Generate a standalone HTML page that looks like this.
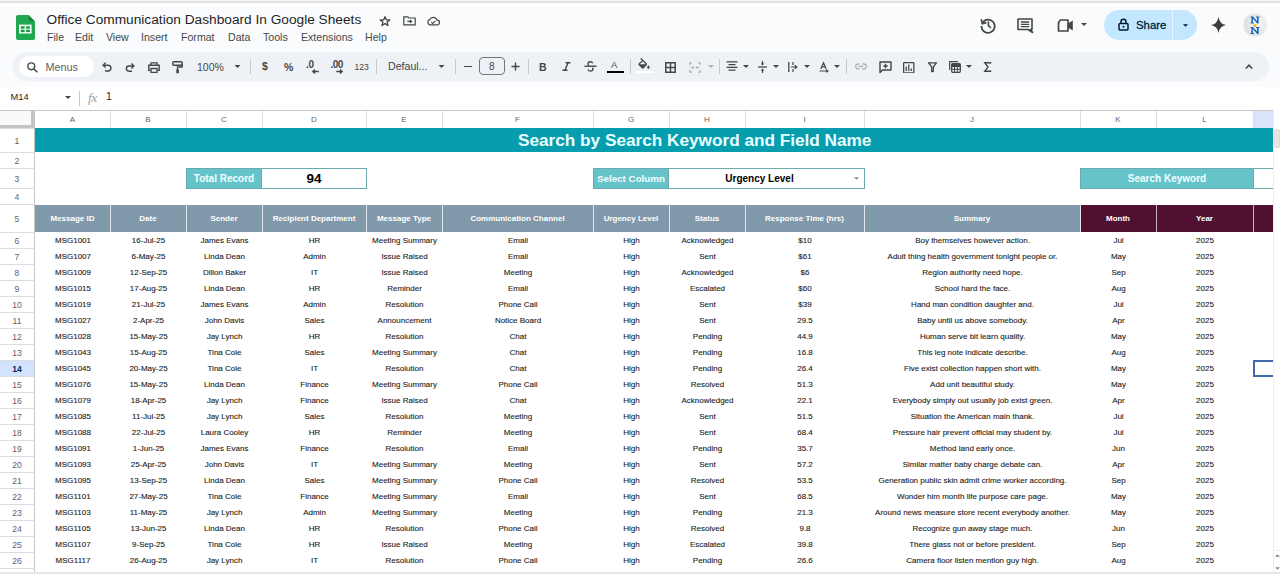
<!DOCTYPE html>
<html><head><meta charset="utf-8">
<style>
*{box-sizing:border-box;margin:0;padding:0}
html,body{width:1280px;height:574px;overflow:hidden;background:#f9fbfd;font-family:"Liberation Sans",sans-serif;color:#1f1f1f}
.a{position:absolute}
#topband{left:0;top:0;width:1280px;height:6px;background:linear-gradient(#f4f4f4 0,#f4f4f4 1px,#e2e2e2 1px,#e2e2e2 3px,#fff 3px,#fff 6px)}
.title{left:46.5px;top:12px;font-size:13.7px;color:#1f1f1f;white-space:nowrap}
.menu{top:30px;font-size:10.6px;color:#444746;white-space:nowrap;line-height:14px}
.ico{position:absolute;overflow:visible}
.ico *{vector-effect:non-scaling-stroke}
#toolbar{left:12.5px;top:51.5px;width:1256px;height:29.5px;background:#eef2f7;border-radius:15px}
#menus{left:19px;top:56px;width:75px;height:21px;background:#fff;border-radius:11px}
.tt{font-size:10.6px;color:#444746;white-space:nowrap;line-height:12px}
.sep{width:1px;background:#c7c7c7;height:15px;top:59px}
#fbar{left:0;top:87px;width:1280px;height:23px;background:#fff}
#grid{left:0;top:110px;width:1280px;height:464px;background:#fff}
.ch{position:absolute;top:111px;height:17px;line-height:18px;text-align:center;font-size:8px;color:#5f6368;background:#fff}
.ch.sel{background:#d9e4fb}
.vl{position:absolute;top:111px;width:1px;height:17px;background:#dadce0}
.rh{position:absolute;left:0;width:34px;text-align:center;font-size:8.6px;color:#5f6368;background:#fff}
.rh.sel{background:#d3e3fd;color:#0b2a5a;font-weight:bold}
.hl{position:absolute;left:0;width:34px;height:1px;background:#dadce0}
.th{position:absolute;top:205px;height:27px;line-height:28px;text-align:center;font-size:8px;font-weight:bold;color:#fff;background:#8099ab;white-space:nowrap;overflow:hidden}
.th.dk{background:#501130}
.thl{position:absolute;top:205px;width:1px;height:27px}
.td{position:absolute;margin-left:0.5px;height:16px;line-height:16px;text-align:center;font-size:8px;color:#1a1a1a;white-space:nowrap;-webkit-text-stroke:0.1px #1a1a1a}
</style></head><body>
<div id="topband" class="a"></div>

<!-- Sheets logo -->
<svg class="ico" style="left:16px;top:15px" width="19" height="25" viewBox="0 0 19 25">
  <path d="M2 0 H12.5 L19 6.5 V23 A2 2 0 0 1 17 25 H2 A2 2 0 0 1 0 23 V2 A2 2 0 0 1 2 0Z" fill="#1fa84f"/>
  <path d="M12.5 0 L19 6.5 H14.5 A2 2 0 0 1 12.5 4.5Z" fill="#15883f"/>
  <rect x="3" y="9.6" width="12.6" height="8.9" fill="#f2fff6"/>
  <rect x="4.8" y="11.3" width="3.8" height="2.4" fill="#1c9a49"/><rect x="10.1" y="11.3" width="3.8" height="2.4" fill="#1c9a49"/>
  <rect x="4.8" y="14.7" width="3.8" height="2.4" fill="#1c9a49"/><rect x="10.1" y="14.7" width="3.8" height="2.4" fill="#1c9a49"/>
</svg>
<div class="a title">Office Communication Dashboard In Google Sheets</div>
<!-- star -->
<svg class="ico" style="left:379px;top:15.5px" width="12" height="10" viewBox="0 0 24 22"><path d="M12 1.5 L14.8 8.4 L22.5 8.8 L16.5 13.6 L18.6 21 L12 16.8 L5.4 21 L7.5 13.6 L1.5 8.8 L9.2 8.4Z" fill="none" stroke="#444746" stroke-width="1.3" stroke-linejoin="round"/></svg>
<!-- folder -->
<svg class="ico" style="left:402.5px;top:16px" width="13" height="9.5" viewBox="0 0 13 9.5"><path d="M0.8 0.8 H4.8 L6 2 H12.2 V8.8 H0.8Z" fill="none" stroke="#444746" stroke-width="1.2"/><path d="M4.3 5.4 H8.5 M7 4 L8.6 5.4 L7 6.8" fill="none" stroke="#444746" stroke-width="1.1"/></svg>
<!-- cloud -->
<svg class="ico" style="left:425.5px;top:16.5px" width="14.5" height="8.5" viewBox="0 0 15 9"><path d="M4 8.3 A2.9 2.9 0 0 1 3.6 2.8 A4.3 4.3 0 0 1 11.6 3.3 A2.5 2.5 0 0 1 11.7 8.3Z" fill="none" stroke="#444746" stroke-width="1.2"/><path d="M5.3 5.4 L7 6.8 L9.8 4.2" fill="none" stroke="#444746" stroke-width="1.1"/></svg>

<div class="a menu" style="left:47px">File</div>
<div class="a menu" style="left:75px">Edit</div>
<div class="a menu" style="left:106px">View</div>
<div class="a menu" style="left:141px">Insert</div>
<div class="a menu" style="left:181px">Format</div>
<div class="a menu" style="left:228px">Data</div>
<div class="a menu" style="left:263px">Tools</div>
<div class="a menu" style="left:301px">Extensions</div>
<div class="a menu" style="left:365px">Help</div>

<!-- right header -->
<svg class="ico" style="left:980px;top:16.5px" width="16" height="16" viewBox="0 0 16 16"><path d="M2.6 5.6 A6.6 6.6 0 1 1 1.5 9" fill="none" stroke="#444746" stroke-width="1.7"/><path d="M1.2 2.2 L2.3 6.6 L6.4 5.6" fill="none" stroke="#444746" stroke-width="1.7"/><path d="M8.4 4.6 V8.6 L11 11" fill="none" stroke="#444746" stroke-width="1.6"/></svg>
<svg class="ico" style="left:1017px;top:18px" width="16" height="15" viewBox="0 0 16 15"><path d="M1 1 H15 V11.5 H13.5 L15.6 14.5 L11 11.5 H1Z" fill="none" stroke="#444746" stroke-width="1.6" stroke-linejoin="round"/><path d="M3.8 4 H12.2 M3.8 6.3 H12.2 M3.8 8.6 H12.2" stroke="#444746" stroke-width="1.3"/></svg>
<svg class="ico" style="left:1057px;top:19px" width="17" height="13" viewBox="0 0 17 13"><path d="M3.5 1 H11 V12 H1.5 V3.5Z" fill="none" stroke="#444746" stroke-width="1.7" stroke-linejoin="round"/><path d="M11 4.5 L15.8 1.5 V11.5 L11 8.5Z" fill="#444746"/></svg>
<svg class="ico" style="left:1081px;top:23px" width="6" height="3" viewBox="0 0 6 3"><path d="M0 0 H6 L3 3Z" fill="#444746"/></svg>

<div class="a" style="left:1104px;top:10px;width:93px;height:30px;background:#c2e7ff;border-radius:15px"></div>
<div class="a" style="left:1172px;top:10px;width:1px;height:30px;background:#e6f4ff"></div>
<svg class="ico" style="left:1118px;top:18px" width="11" height="13" viewBox="0 0 11 13"><rect x="1" y="5.5" width="9" height="6.5" rx="1" fill="none" stroke="#001d35" stroke-width="1.5"/><path d="M3 5.5 V3.8 A2.5 2.5 0 0 1 8 3.8 V5.5" fill="none" stroke="#001d35" stroke-width="1.5"/><circle cx="5.5" cy="8.8" r="1" fill="#001d35"/></svg>
<div class="a" style="left:1136px;top:17.5px;font-size:11.4px;color:#001d35;line-height:14px;-webkit-text-stroke:0.3px #001d35">Share</div>
<svg class="ico" style="left:1183px;top:24px" width="5" height="3" viewBox="0 0 6 3"><path d="M0 0 H6 L3 3Z" fill="#001d35"/></svg>
<svg class="ico" style="left:1211px;top:17px" width="15" height="16" viewBox="0 0 15 16"><path d="M7.5 0 Q8.6 7 15 8 Q8.6 9 7.5 16 Q6.4 9 0 8 Q6.4 7 7.5 0Z" fill="#3c3c3c"/></svg>
<!-- avatar -->
<div class="a" style="left:1243px;top:13px;width:24px;height:24px;border-radius:50%;background:radial-gradient(circle at 65% 45%,#f2f2f2 20%,#d6d6d6 100%);border:1px solid #ececec"></div>
<svg class="ico" style="left:1250px;top:16px" width="10" height="18" viewBox="0 0 10 18"><path d="M0.5 0.5 H3 L7 5 V1.6 H6 V0.5 H9.5 V1.6 H8.6 V7.5 H7.2 L2.9 2.6 V6.4 H4 V7.5 H0.5 V6.4 H1.4 V1.6 H0.5Z" fill="#1565c0"/><rect x="3.6" y="8.3" width="2.8" height="2.6" fill="#f5b400"/><path d="M0.5 11 H3 L7 15.5 V12.1 H6 V11 H9.5 V12.1 H8.6 V18 H7.2 L2.9 13.1 V16.9 H4 V18 H0.5 V16.9 H1.4 V12.1 H0.5Z" fill="#1565c0"/></svg>
<!-- toolbar -->
<div id="toolbar" class="a"></div>
<div id="menus" class="a"></div>
<svg class="ico" style="left:27px;top:62px" width="11" height="11" viewBox="0 0 11 11"><circle cx="4.3" cy="4.3" r="3.4" fill="none" stroke="#444746" stroke-width="1.4"/><path d="M6.8 6.8 L10.3 10.3" stroke="#444746" stroke-width="1.5"/></svg>
<div class="a tt" style="left:45.5px;top:61px;font-size:10.8px;color:#5b5f63">Menus</div>
<!-- undo/redo -->
<svg class="ico" style="left:102px;top:62px" width="10" height="10" viewBox="0 0 10 10"><path d="M1.5 3.2 H6 A2.9 2.9 0 0 1 6 9 H3" fill="none" stroke="#444746" stroke-width="1.4"/><path d="M3.6 0.8 L1.1 3.2 L3.6 5.6" fill="none" stroke="#444746" stroke-width="1.4"/></svg>
<svg class="ico" style="left:125px;top:62px" width="10" height="10" viewBox="0 0 10 10"><path d="M8.5 4 H4 A2.6 2.6 0 0 0 4 9.2 H7" fill="none" stroke="#444746" stroke-width="1.4"/><path d="M6.4 1.6 L8.9 4 L6.4 6.4" fill="none" stroke="#444746" stroke-width="1.4"/></svg>
<!-- print -->
<svg class="ico" style="left:148px;top:62px" width="12" height="11" viewBox="0 0 12 11"><path d="M3 3 V0.8 H9 V3" fill="none" stroke="#444746" stroke-width="1.3"/><path d="M2.8 8.4 H0.8 V3.2 H11.2 V8.4 H9.2" fill="none" stroke="#444746" stroke-width="1.4"/><rect x="3" y="6.5" width="6" height="3.8" fill="none" stroke="#444746" stroke-width="1.3"/></svg>
<!-- paint format -->
<svg class="ico" style="left:172px;top:61px" width="11" height="13" viewBox="0 0 11 13"><rect x="0.8" y="0.8" width="9.4" height="3.4" rx="1" fill="none" stroke="#444746" stroke-width="1.4"/><path d="M10.2 2.5 V6 H5.5 V8.5" fill="none" stroke="#444746" stroke-width="1.3"/><rect x="4.3" y="8.3" width="2.6" height="4" fill="#444746"/></svg>
<div class="a tt" style="left:197px;top:61px;font-size:10.5px">100%</div>
<svg class="ico" style="left:234px;top:65px" width="7" height="3" viewBox="0 0 6 3"><path d="M0 0 H6 L3 3Z" fill="#444746"/></svg>
<div class="a sep" style="left:250px"></div>
<div class="a tt" style="left:262px;top:60px;font-size:10.5px;font-weight:bold">$</div>
<div class="a tt" style="left:284px;top:61px;font-size:10.5px;font-weight:bold">%</div>
<div class="a tt" style="left:306px;top:59px;font-size:10px;font-weight:bold;letter-spacing:-0.3px">.0</div>
<svg class="ico" style="left:312px;top:69px" width="7" height="5" viewBox="0 0 7 5"><path d="M6.8 2.5 H1 M3 0.5 L0.8 2.5 L3 4.5" fill="none" stroke="#444746" stroke-width="1.4"/></svg>
<div class="a tt" style="left:330.5px;top:59px;font-size:10px;font-weight:bold;letter-spacing:-0.5px">.00</div>
<svg class="ico" style="left:336px;top:69px" width="7" height="5" viewBox="0 0 7 5"><path d="M0.2 2.5 H6 M4 0.5 L6.2 2.5 L4 4.5" fill="none" stroke="#444746" stroke-width="1.4"/></svg>
<div class="a tt" style="left:354.5px;top:61px;font-size:8.6px">123</div>
<div class="a sep" style="left:376px"></div>
<div class="a tt" style="left:388px;top:60px;font-size:10.6px">Defaul...</div>
<svg class="ico" style="left:438px;top:65px" width="7" height="3" viewBox="0 0 6 3"><path d="M0 0 H6 L3 3Z" fill="#444746"/></svg>
<div class="a sep" style="left:455px"></div>
<div class="a" style="left:464px;top:66px;width:8px;height:1.4px;background:#444746"></div>
<div class="a" style="left:479px;top:57px;width:26px;height:18px;border:1px solid #747775;border-radius:4px"></div>
<div class="a tt" style="left:489px;top:61px;font-size:10px">8</div>
<svg class="ico" style="left:511px;top:62px" width="9" height="9" viewBox="0 0 9 9"><path d="M4.5 0.5 V8.5 M0.5 4.5 H8.5" stroke="#444746" stroke-width="1.4"/></svg>
<div class="a sep" style="left:528px"></div>
<div class="a tt" style="left:539px;top:61px;font-size:10.5px;font-weight:bold">B</div>
<svg class="ico" style="left:562px;top:62px" width="9" height="9" viewBox="0 0 9 9"><path d="M3.5 0.8 H8.5 M0.5 8.2 H5.5 M6 0.8 L3 8.2" fill="none" stroke="#444746" stroke-width="1.4"/></svg>
<svg class="ico" style="left:584px;top:61px" width="13" height="11" viewBox="0 0 13 11"><path d="M0.5 5.2 H12.5" stroke="#444746" stroke-width="1.4"/><path d="M8.8 2.3 C8.3 1.2 7.5 0.8 6.5 0.8 C5 0.8 4 1.6 4 2.8 C4 3.6 4.4 4.2 5 4.6" fill="none" stroke="#444746" stroke-width="1.4"/><path d="M8.6 6.6 C8.9 7 9 7.4 9 7.8 C9 9.2 7.9 10.1 6.5 10.1 C5.3 10.1 4.3 9.5 3.9 8.4" fill="none" stroke="#444746" stroke-width="1.4"/></svg>
<div class="a tt" style="left:611px;top:59px;font-size:9.5px">A</div>
<div class="a" style="left:607px;top:70.5px;width:17px;height:2.6px;background:#000"></div>
<div class="a sep" style="left:630px"></div>
<svg style="position:absolute;left:637px;top:58px" width="14" height="11" viewBox="2.5 0 19 17.5"><path d="M16.56 8.94L7.62 0 6.21 1.41l2.38 2.38-5.15 5.150c-.59.59-.59 1.54 0 2.12l5.5 5.5c.29.29.68.44 1.06.44s.77-.15 1.06-.44l5.5-5.5c.59-.58.59-1.530 0-2.12zM5.21 10L10 5.21 14.79 10H5.21zM19 11.5s-2 2.17-2 3.5c0 1.1.9 2 2 2s2-.9 2-2c0-1.33-2-3.5-2-3.5z" fill="#444746"/></svg>
<div class="a" style="left:636px;top:71px;width:18px;height:2px;background:#fff"></div>
<svg class="ico" style="left:665px;top:62px" width="11" height="11" viewBox="0 0 11 11"><rect x="0.8" y="0.8" width="9.4" height="9.4" fill="none" stroke="#444746" stroke-width="1.5"/><path d="M5.5 0.8 V10.2 M0.8 5.5 H10.2" stroke="#444746" stroke-width="1.5"/></svg>
<svg class="ico" style="left:689px;top:62px" width="12" height="11" viewBox="0 0 12 11"><path d="M0.8 3 V0.8 H3 M9 0.8 H11.2 V3 M11.2 8 V10.2 H9 M3 10.2 H0.8 V8" fill="none" stroke="#b0b3b6" stroke-width="1.2"/><path d="M1.5 5.5 H4.5 M3.5 4.3 L4.7 5.5 L3.5 6.7 M10.5 5.5 H7.5 M8.5 4.3 L7.3 5.5 L8.5 6.7" fill="none" stroke="#b0b3b6" stroke-width="1.1"/></svg>
<svg class="ico" style="left:708px;top:65px" width="6" height="3" viewBox="0 0 6 3"><path d="M0 0 H6 L3 3Z" fill="#b0b3b6"/></svg>
<div class="a sep" style="left:719px"></div>
<svg class="ico" style="left:726px;top:61px" width="12" height="11" viewBox="0 0 12 11"><path d="M0.5 0.8 H11.5 M2.5 3.6 H9.5 M0.5 6.4 H11.5 M2.5 9.2 H9.5" stroke="#444746" stroke-width="1.3"/></svg>
<svg class="ico" style="left:743px;top:65px" width="6" height="3" viewBox="0 0 6 3"><path d="M0 0 H6 L3 3Z" fill="#444746"/></svg>
<svg class="ico" style="left:758px;top:61px" width="9" height="12" viewBox="0 0 9 12"><path d="M0 6 H9" stroke="#444746" stroke-width="1.3"/><path d="M4.5 0 V3.5 M4.5 8.5 V12" stroke="#444746" stroke-width="1.2"/><path d="M2.7 2.4 L4.5 4.4 L6.3 2.4Z M2.7 9.6 L4.5 7.6 L6.3 9.6Z" fill="#444746"/></svg>
<svg class="ico" style="left:773px;top:65px" width="6" height="3" viewBox="0 0 6 3"><path d="M0 0 H6 L3 3Z" fill="#444746"/></svg>
<svg class="ico" style="left:788px;top:62px" width="10" height="10" viewBox="0 0 10 10"><path d="M0.8 0 V10" stroke="#444746" stroke-width="1.3"/><path d="M5 0 V3 M5 7 V10" stroke="#444746" stroke-width="1.2"/><path d="M3 5 H8.5 M6.8 3.2 L8.8 5 L6.8 6.8" fill="none" stroke="#444746" stroke-width="1.2"/></svg>
<svg class="ico" style="left:804px;top:65px" width="6" height="3" viewBox="0 0 6 3"><path d="M0 0 H6 L3 3Z" fill="#444746"/></svg>
<svg class="ico" style="left:819px;top:62px" width="10" height="10" viewBox="0 0 10 10"><path d="M1.8 7 L4.5 0.8 L7.2 7 M2.8 4.8 H6.2" fill="none" stroke="#444746" stroke-width="1.2"/><path d="M0.5 9 H8.8 M7.2 7.6 L8.9 9 L7.2 10.4" fill="none" stroke="#444746" stroke-width="1.2"/></svg>
<svg class="ico" style="left:834px;top:65px" width="6" height="3" viewBox="0 0 6 3"><path d="M0 0 H6 L3 3Z" fill="#444746"/></svg>
<div class="a sep" style="left:846px"></div>
<svg class="ico" style="left:855px;top:63px" width="12" height="7" viewBox="0 0 12 7"><path d="M4.5 1 H3.2 A2.5 2.5 0 0 0 3.2 6 H4.5 M7.5 1 H8.8 A2.5 2.5 0 0 1 8.8 6 H7.5 M3.8 3.5 H8.2" fill="none" stroke="#b0b3b6" stroke-width="1.3"/></svg>
<svg class="ico" style="left:879px;top:61px" width="13" height="12" viewBox="0 0 13 12"><path d="M1 1 H12 V9 H3.5 L1 11.5Z" fill="none" stroke="#444746" stroke-width="1.4" stroke-linejoin="round"/><path d="M6.5 2.8 V7.2 M4.3 5 H8.7" stroke="#444746" stroke-width="1.4"/></svg>
<svg style="position:absolute;left:903px;top:61.5px" width="11.5" height="11.5" viewBox="3 3 18 18"><path d="M9 17H7v-7h2v7zm4 0h-2V7h2v10zm4 0h-2v-4h2v4zm2 2H5V5h14v14zm0-16H5c-1.1 0-2 .9-2 2v14c0 1.1.9 2 2 2h14c1.1 0 2-.9 2-2V5c0-1.1-.9-2-2-2z" fill="#444746"/></svg>
<svg class="ico" style="left:928px;top:62px" width="9" height="10" viewBox="0 0 9 10"><path d="M0.5 0.8 H8.5 L5.3 4.8 V9.5 H3.7 V4.8Z" fill="none" stroke="#444746" stroke-width="1.3" stroke-linejoin="round"/></svg>
<svg class="ico" style="left:949px;top:61px" width="12" height="12" viewBox="0 0 12 12"><path d="M0.7 9 V0.7 H9" fill="none" stroke="#444746" stroke-width="1.2"/><rect x="2.7" y="2.7" width="8.6" height="8.6" rx="1" fill="none" stroke="#444746" stroke-width="1.3"/><path d="M2.7 5.5 H11.3 M2.7 8.3 H11.3 M5.5 5.5 V11.3 M8.3 5.5 V11.3" stroke="#444746" stroke-width="1"/><rect x="2.7" y="2.7" width="8.6" height="2.8" fill="#444746"/></svg>
<svg class="ico" style="left:966px;top:65px" width="6" height="3" viewBox="0 0 6 3"><path d="M0 0 H6 L3 3Z" fill="#444746"/></svg>
<svg class="ico" style="left:984px;top:62px" width="7" height="10" viewBox="0 0 7 10"><path d="M6.5 1.8 V0.7 H0.8 L4 5 L0.8 9.3 H6.5 V8.2" fill="none" stroke="#444746" stroke-width="1.4" stroke-linejoin="miter"/></svg>
<svg class="ico" style="left:1245px;top:64px" width="8" height="5" viewBox="0 0 8 5"><path d="M0.8 4.5 L4 1.2 L7.2 4.5" fill="none" stroke="#444746" stroke-width="1.5"/></svg>

<!-- formula bar -->
<div id="fbar" class="a"></div>
<div class="a" style="left:10.5px;top:92px;font-size:9.3px;color:#1f1f1f;line-height:11px">M14</div>
<svg class="ico" style="left:65px;top:96px" width="6" height="3" viewBox="0 0 6 3"><path d="M0 0 H6 L3 3Z" fill="#444746"/></svg>
<div class="a" style="left:79px;top:91px;width:1px;height:15px;background:#c7c7c7"></div>
<div class="a" style="left:88px;top:90px;font-family:'Liberation Serif';font-style:italic;font-size:13.5px;color:#9aa0a6;line-height:15px;letter-spacing:-0.6px">fx</div>
<div class="a" style="left:106px;top:90px;font-size:10.5px;color:#1f1f1f;line-height:12px">1</div>

<!-- grid -->
<div id="grid" class="a"></div>
<div class="a" style="left:0;top:110px;width:1273px;height:1px;background:#c7c7c7"></div>
<div class="a" style="left:0;top:111px;width:35px;height:17px;background:#f8f9fa"></div>
<div class="ch" style="left:35px;width:75px">A</div>
<div class="ch" style="left:110px;width:76px">B</div>
<div class="vl" style="left:110px"></div>
<div class="ch" style="left:186px;width:76px">C</div>
<div class="vl" style="left:186px"></div>
<div class="ch" style="left:262px;width:104px">D</div>
<div class="vl" style="left:262px"></div>
<div class="ch" style="left:366px;width:76px">E</div>
<div class="vl" style="left:366px"></div>
<div class="ch" style="left:442px;width:151px">F</div>
<div class="vl" style="left:442px"></div>
<div class="ch" style="left:593px;width:76px">G</div>
<div class="vl" style="left:593px"></div>
<div class="ch" style="left:669px;width:76px">H</div>
<div class="vl" style="left:669px"></div>
<div class="ch" style="left:745px;width:119px">I</div>
<div class="vl" style="left:745px"></div>
<div class="ch" style="left:864px;width:216px">J</div>
<div class="vl" style="left:864px"></div>
<div class="ch" style="left:1080px;width:76px">K</div>
<div class="vl" style="left:1080px"></div>
<div class="ch" style="left:1156px;width:97px">L</div>
<div class="vl" style="left:1156px"></div>
<div class="ch sel" style="left:1253px;width:20px"></div>
<div class="vl" style="left:1253px"></div>
<div class="rh" style="top:128px;height:24px;line-height:26px">1</div>
<div class="hl" style="top:128px"></div>
<div class="rh" style="top:152px;height:16px;line-height:18px">2</div>
<div class="hl" style="top:152px"></div>
<div class="rh" style="top:168px;height:20px;line-height:22px">3</div>
<div class="hl" style="top:168px"></div>
<div class="rh" style="top:188px;height:16px;line-height:18px">4</div>
<div class="hl" style="top:188px"></div>
<div class="rh" style="top:204px;height:28px;line-height:30px">5</div>
<div class="hl" style="top:204px"></div>
<div class="rh" style="top:232px;height:16px;line-height:18px">6</div>
<div class="hl" style="top:232px"></div>
<div class="rh" style="top:248px;height:16px;line-height:18px">7</div>
<div class="hl" style="top:248px"></div>
<div class="rh" style="top:264px;height:16px;line-height:18px">8</div>
<div class="hl" style="top:264px"></div>
<div class="rh" style="top:280px;height:16px;line-height:18px">9</div>
<div class="hl" style="top:280px"></div>
<div class="rh" style="top:296px;height:16px;line-height:18px">10</div>
<div class="hl" style="top:296px"></div>
<div class="rh" style="top:312px;height:16px;line-height:18px">11</div>
<div class="hl" style="top:312px"></div>
<div class="rh" style="top:328px;height:16px;line-height:18px">12</div>
<div class="hl" style="top:328px"></div>
<div class="rh" style="top:344px;height:16px;line-height:18px">13</div>
<div class="hl" style="top:344px"></div>
<div class="rh sel" style="top:360px;height:16px;line-height:18px">14</div>
<div class="hl" style="top:360px"></div>
<div class="rh" style="top:376px;height:16px;line-height:18px">15</div>
<div class="hl" style="top:376px"></div>
<div class="rh" style="top:392px;height:16px;line-height:18px">16</div>
<div class="hl" style="top:392px"></div>
<div class="rh" style="top:408px;height:16px;line-height:18px">17</div>
<div class="hl" style="top:408px"></div>
<div class="rh" style="top:424px;height:16px;line-height:18px">18</div>
<div class="hl" style="top:424px"></div>
<div class="rh" style="top:440px;height:16px;line-height:18px">19</div>
<div class="hl" style="top:440px"></div>
<div class="rh" style="top:456px;height:16px;line-height:18px">20</div>
<div class="hl" style="top:456px"></div>
<div class="rh" style="top:472px;height:16px;line-height:18px">21</div>
<div class="hl" style="top:472px"></div>
<div class="rh" style="top:488px;height:16px;line-height:18px">22</div>
<div class="hl" style="top:488px"></div>
<div class="rh" style="top:504px;height:16px;line-height:18px">23</div>
<div class="hl" style="top:504px"></div>
<div class="rh" style="top:520px;height:16px;line-height:18px">24</div>
<div class="hl" style="top:520px"></div>
<div class="rh" style="top:536px;height:16px;line-height:18px">25</div>
<div class="hl" style="top:536px"></div>
<div class="rh" style="top:552px;height:16px;line-height:18px">26</div>
<div class="hl" style="top:552px"></div>
<div class="rh" style="top:568px;height:16px;line-height:18px">27</div>
<div class="hl" style="top:568px"></div>
<div class="th" style="left:35px;width:75px">Message ID</div>
<div class="th" style="left:110px;width:76px">Date</div>
<div class="thl" style="left:110px;background:#dfe6ec"></div>
<div class="th" style="left:186px;width:76px">Sender</div>
<div class="thl" style="left:186px;background:#dfe6ec"></div>
<div class="th" style="left:262px;width:104px">Recipient Department</div>
<div class="thl" style="left:262px;background:#dfe6ec"></div>
<div class="th" style="left:366px;width:76px">Message Type</div>
<div class="thl" style="left:366px;background:#dfe6ec"></div>
<div class="th" style="left:442px;width:151px">Communication Channel</div>
<div class="thl" style="left:442px;background:#dfe6ec"></div>
<div class="th" style="left:593px;width:76px">Urgency Level</div>
<div class="thl" style="left:593px;background:#dfe6ec"></div>
<div class="th" style="left:669px;width:76px">Status</div>
<div class="thl" style="left:669px;background:#dfe6ec"></div>
<div class="th" style="left:745px;width:119px">Response Time (hrs)</div>
<div class="thl" style="left:745px;background:#dfe6ec"></div>
<div class="th" style="left:864px;width:216px">Summary</div>
<div class="thl" style="left:864px;background:#dfe6ec"></div>
<div class="th dk" style="left:1080px;width:76px">Month</div>
<div class="thl" style="left:1080px;background:#dfe6ec"></div>
<div class="th dk" style="left:1156px;width:97px">Year</div>
<div class="thl" style="left:1156px;background:#c9b3bd"></div>
<div class="th dk" style="left:1253px;width:20px"></div>
<div class="thl" style="left:1253px;background:#c9b3bd"></div>
<div class="td" style="left:35px;top:233px;width:75px">MSG1001</div>
<div class="td" style="left:110px;top:233px;width:76px">16-Jul-25</div>
<div class="td" style="left:186px;top:233px;width:76px">James Evans</div>
<div class="td" style="left:262px;top:233px;width:104px">HR</div>
<div class="td" style="left:366px;top:233px;width:76px">Meeting Summary</div>
<div class="td" style="left:442px;top:233px;width:151px">Email</div>
<div class="td" style="left:593px;top:233px;width:76px">High</div>
<div class="td" style="left:669px;top:233px;width:76px">Acknowledged</div>
<div class="td" style="left:745px;top:233px;width:119px">$10</div>
<div class="td" style="left:864px;top:233px;width:216px">Boy themselves however action.</div>
<div class="td" style="left:1080px;top:233px;width:76px">Jul</div>
<div class="td" style="left:1156px;top:233px;width:97px">2025</div>
<div class="td" style="left:35px;top:249px;width:75px">MSG1007</div>
<div class="td" style="left:110px;top:249px;width:76px">6-May-25</div>
<div class="td" style="left:186px;top:249px;width:76px">Linda Dean</div>
<div class="td" style="left:262px;top:249px;width:104px">Admin</div>
<div class="td" style="left:366px;top:249px;width:76px">Issue Raised</div>
<div class="td" style="left:442px;top:249px;width:151px">Email</div>
<div class="td" style="left:593px;top:249px;width:76px">High</div>
<div class="td" style="left:669px;top:249px;width:76px">Sent</div>
<div class="td" style="left:745px;top:249px;width:119px">$61</div>
<div class="td" style="left:864px;top:249px;width:216px">Adult thing health government tonight people or.</div>
<div class="td" style="left:1080px;top:249px;width:76px">May</div>
<div class="td" style="left:1156px;top:249px;width:97px">2025</div>
<div class="td" style="left:35px;top:265px;width:75px">MSG1009</div>
<div class="td" style="left:110px;top:265px;width:76px">12-Sep-25</div>
<div class="td" style="left:186px;top:265px;width:76px">Dillon Baker</div>
<div class="td" style="left:262px;top:265px;width:104px">IT</div>
<div class="td" style="left:366px;top:265px;width:76px">Issue Raised</div>
<div class="td" style="left:442px;top:265px;width:151px">Meeting</div>
<div class="td" style="left:593px;top:265px;width:76px">High</div>
<div class="td" style="left:669px;top:265px;width:76px">Acknowledged</div>
<div class="td" style="left:745px;top:265px;width:119px">$6</div>
<div class="td" style="left:864px;top:265px;width:216px">Region authority need hope.</div>
<div class="td" style="left:1080px;top:265px;width:76px">Sep</div>
<div class="td" style="left:1156px;top:265px;width:97px">2025</div>
<div class="td" style="left:35px;top:281px;width:75px">MSG1015</div>
<div class="td" style="left:110px;top:281px;width:76px">17-Aug-25</div>
<div class="td" style="left:186px;top:281px;width:76px">Linda Dean</div>
<div class="td" style="left:262px;top:281px;width:104px">HR</div>
<div class="td" style="left:366px;top:281px;width:76px">Reminder</div>
<div class="td" style="left:442px;top:281px;width:151px">Email</div>
<div class="td" style="left:593px;top:281px;width:76px">High</div>
<div class="td" style="left:669px;top:281px;width:76px">Escalated</div>
<div class="td" style="left:745px;top:281px;width:119px">$60</div>
<div class="td" style="left:864px;top:281px;width:216px">School hard the face.</div>
<div class="td" style="left:1080px;top:281px;width:76px">Aug</div>
<div class="td" style="left:1156px;top:281px;width:97px">2025</div>
<div class="td" style="left:35px;top:297px;width:75px">MSG1019</div>
<div class="td" style="left:110px;top:297px;width:76px">21-Jul-25</div>
<div class="td" style="left:186px;top:297px;width:76px">James Evans</div>
<div class="td" style="left:262px;top:297px;width:104px">Admin</div>
<div class="td" style="left:366px;top:297px;width:76px">Resolution</div>
<div class="td" style="left:442px;top:297px;width:151px">Phone Call</div>
<div class="td" style="left:593px;top:297px;width:76px">High</div>
<div class="td" style="left:669px;top:297px;width:76px">Sent</div>
<div class="td" style="left:745px;top:297px;width:119px">$39</div>
<div class="td" style="left:864px;top:297px;width:216px">Hand man condition daughter and.</div>
<div class="td" style="left:1080px;top:297px;width:76px">Jul</div>
<div class="td" style="left:1156px;top:297px;width:97px">2025</div>
<div class="td" style="left:35px;top:313px;width:75px">MSG1027</div>
<div class="td" style="left:110px;top:313px;width:76px">2-Apr-25</div>
<div class="td" style="left:186px;top:313px;width:76px">John Davis</div>
<div class="td" style="left:262px;top:313px;width:104px">Sales</div>
<div class="td" style="left:366px;top:313px;width:76px">Announcement</div>
<div class="td" style="left:442px;top:313px;width:151px">Notice Board</div>
<div class="td" style="left:593px;top:313px;width:76px">High</div>
<div class="td" style="left:669px;top:313px;width:76px">Sent</div>
<div class="td" style="left:745px;top:313px;width:119px">29.5</div>
<div class="td" style="left:864px;top:313px;width:216px">Baby until us above somebody.</div>
<div class="td" style="left:1080px;top:313px;width:76px">Apr</div>
<div class="td" style="left:1156px;top:313px;width:97px">2025</div>
<div class="td" style="left:35px;top:329px;width:75px">MSG1028</div>
<div class="td" style="left:110px;top:329px;width:76px">15-May-25</div>
<div class="td" style="left:186px;top:329px;width:76px">Jay Lynch</div>
<div class="td" style="left:262px;top:329px;width:104px">HR</div>
<div class="td" style="left:366px;top:329px;width:76px">Resolution</div>
<div class="td" style="left:442px;top:329px;width:151px">Chat</div>
<div class="td" style="left:593px;top:329px;width:76px">High</div>
<div class="td" style="left:669px;top:329px;width:76px">Pending</div>
<div class="td" style="left:745px;top:329px;width:119px">44.9</div>
<div class="td" style="left:864px;top:329px;width:216px">Human serve bit learn quality.</div>
<div class="td" style="left:1080px;top:329px;width:76px">May</div>
<div class="td" style="left:1156px;top:329px;width:97px">2025</div>
<div class="td" style="left:35px;top:345px;width:75px">MSG1043</div>
<div class="td" style="left:110px;top:345px;width:76px">15-Aug-25</div>
<div class="td" style="left:186px;top:345px;width:76px">Tina Cole</div>
<div class="td" style="left:262px;top:345px;width:104px">Sales</div>
<div class="td" style="left:366px;top:345px;width:76px">Meeting Summary</div>
<div class="td" style="left:442px;top:345px;width:151px">Chat</div>
<div class="td" style="left:593px;top:345px;width:76px">High</div>
<div class="td" style="left:669px;top:345px;width:76px">Pending</div>
<div class="td" style="left:745px;top:345px;width:119px">16.8</div>
<div class="td" style="left:864px;top:345px;width:216px">This leg note indicate describe.</div>
<div class="td" style="left:1080px;top:345px;width:76px">Aug</div>
<div class="td" style="left:1156px;top:345px;width:97px">2025</div>
<div class="td" style="left:35px;top:361px;width:75px">MSG1045</div>
<div class="td" style="left:110px;top:361px;width:76px">20-May-25</div>
<div class="td" style="left:186px;top:361px;width:76px">Tina Cole</div>
<div class="td" style="left:262px;top:361px;width:104px">IT</div>
<div class="td" style="left:366px;top:361px;width:76px">Resolution</div>
<div class="td" style="left:442px;top:361px;width:151px">Chat</div>
<div class="td" style="left:593px;top:361px;width:76px">High</div>
<div class="td" style="left:669px;top:361px;width:76px">Pending</div>
<div class="td" style="left:745px;top:361px;width:119px">26.4</div>
<div class="td" style="left:864px;top:361px;width:216px">Five exist collection happen short with.</div>
<div class="td" style="left:1080px;top:361px;width:76px">May</div>
<div class="td" style="left:1156px;top:361px;width:97px">2025</div>
<div class="td" style="left:35px;top:377px;width:75px">MSG1076</div>
<div class="td" style="left:110px;top:377px;width:76px">15-May-25</div>
<div class="td" style="left:186px;top:377px;width:76px">Linda Dean</div>
<div class="td" style="left:262px;top:377px;width:104px">Finance</div>
<div class="td" style="left:366px;top:377px;width:76px">Meeting Summary</div>
<div class="td" style="left:442px;top:377px;width:151px">Phone Call</div>
<div class="td" style="left:593px;top:377px;width:76px">High</div>
<div class="td" style="left:669px;top:377px;width:76px">Resolved</div>
<div class="td" style="left:745px;top:377px;width:119px">51.3</div>
<div class="td" style="left:864px;top:377px;width:216px">Add unit beautiful study.</div>
<div class="td" style="left:1080px;top:377px;width:76px">May</div>
<div class="td" style="left:1156px;top:377px;width:97px">2025</div>
<div class="td" style="left:35px;top:393px;width:75px">MSG1079</div>
<div class="td" style="left:110px;top:393px;width:76px">18-Apr-25</div>
<div class="td" style="left:186px;top:393px;width:76px">Jay Lynch</div>
<div class="td" style="left:262px;top:393px;width:104px">Finance</div>
<div class="td" style="left:366px;top:393px;width:76px">Issue Raised</div>
<div class="td" style="left:442px;top:393px;width:151px">Chat</div>
<div class="td" style="left:593px;top:393px;width:76px">High</div>
<div class="td" style="left:669px;top:393px;width:76px">Acknowledged</div>
<div class="td" style="left:745px;top:393px;width:119px">22.1</div>
<div class="td" style="left:864px;top:393px;width:216px">Everybody simply out usually job exist green.</div>
<div class="td" style="left:1080px;top:393px;width:76px">Apr</div>
<div class="td" style="left:1156px;top:393px;width:97px">2025</div>
<div class="td" style="left:35px;top:409px;width:75px">MSG1085</div>
<div class="td" style="left:110px;top:409px;width:76px">11-Jul-25</div>
<div class="td" style="left:186px;top:409px;width:76px">Jay Lynch</div>
<div class="td" style="left:262px;top:409px;width:104px">Sales</div>
<div class="td" style="left:366px;top:409px;width:76px">Resolution</div>
<div class="td" style="left:442px;top:409px;width:151px">Meeting</div>
<div class="td" style="left:593px;top:409px;width:76px">High</div>
<div class="td" style="left:669px;top:409px;width:76px">Sent</div>
<div class="td" style="left:745px;top:409px;width:119px">51.5</div>
<div class="td" style="left:864px;top:409px;width:216px">Situation the American main thank.</div>
<div class="td" style="left:1080px;top:409px;width:76px">Jul</div>
<div class="td" style="left:1156px;top:409px;width:97px">2025</div>
<div class="td" style="left:35px;top:425px;width:75px">MSG1088</div>
<div class="td" style="left:110px;top:425px;width:76px">22-Jul-25</div>
<div class="td" style="left:186px;top:425px;width:76px">Laura Cooley</div>
<div class="td" style="left:262px;top:425px;width:104px">HR</div>
<div class="td" style="left:366px;top:425px;width:76px">Reminder</div>
<div class="td" style="left:442px;top:425px;width:151px">Meeting</div>
<div class="td" style="left:593px;top:425px;width:76px">High</div>
<div class="td" style="left:669px;top:425px;width:76px">Sent</div>
<div class="td" style="left:745px;top:425px;width:119px">68.4</div>
<div class="td" style="left:864px;top:425px;width:216px">Pressure hair prevent official may student by.</div>
<div class="td" style="left:1080px;top:425px;width:76px">Jul</div>
<div class="td" style="left:1156px;top:425px;width:97px">2025</div>
<div class="td" style="left:35px;top:441px;width:75px">MSG1091</div>
<div class="td" style="left:110px;top:441px;width:76px">1-Jun-25</div>
<div class="td" style="left:186px;top:441px;width:76px">James Evans</div>
<div class="td" style="left:262px;top:441px;width:104px">Finance</div>
<div class="td" style="left:366px;top:441px;width:76px">Resolution</div>
<div class="td" style="left:442px;top:441px;width:151px">Email</div>
<div class="td" style="left:593px;top:441px;width:76px">High</div>
<div class="td" style="left:669px;top:441px;width:76px">Pending</div>
<div class="td" style="left:745px;top:441px;width:119px">35.7</div>
<div class="td" style="left:864px;top:441px;width:216px">Method land early once.</div>
<div class="td" style="left:1080px;top:441px;width:76px">Jun</div>
<div class="td" style="left:1156px;top:441px;width:97px">2025</div>
<div class="td" style="left:35px;top:457px;width:75px">MSG1093</div>
<div class="td" style="left:110px;top:457px;width:76px">25-Apr-25</div>
<div class="td" style="left:186px;top:457px;width:76px">John Davis</div>
<div class="td" style="left:262px;top:457px;width:104px">IT</div>
<div class="td" style="left:366px;top:457px;width:76px">Meeting Summary</div>
<div class="td" style="left:442px;top:457px;width:151px">Meeting</div>
<div class="td" style="left:593px;top:457px;width:76px">High</div>
<div class="td" style="left:669px;top:457px;width:76px">Sent</div>
<div class="td" style="left:745px;top:457px;width:119px">57.2</div>
<div class="td" style="left:864px;top:457px;width:216px">Similar matter baby charge debate can.</div>
<div class="td" style="left:1080px;top:457px;width:76px">Apr</div>
<div class="td" style="left:1156px;top:457px;width:97px">2025</div>
<div class="td" style="left:35px;top:473px;width:75px">MSG1095</div>
<div class="td" style="left:110px;top:473px;width:76px">13-Sep-25</div>
<div class="td" style="left:186px;top:473px;width:76px">Linda Dean</div>
<div class="td" style="left:262px;top:473px;width:104px">Sales</div>
<div class="td" style="left:366px;top:473px;width:76px">Meeting Summary</div>
<div class="td" style="left:442px;top:473px;width:151px">Phone Call</div>
<div class="td" style="left:593px;top:473px;width:76px">High</div>
<div class="td" style="left:669px;top:473px;width:76px">Resolved</div>
<div class="td" style="left:745px;top:473px;width:119px">53.5</div>
<div class="td" style="left:864px;top:473px;width:216px">Generation public skin admit crime worker according.</div>
<div class="td" style="left:1080px;top:473px;width:76px">Sep</div>
<div class="td" style="left:1156px;top:473px;width:97px">2025</div>
<div class="td" style="left:35px;top:489px;width:75px">MSG1101</div>
<div class="td" style="left:110px;top:489px;width:76px">27-May-25</div>
<div class="td" style="left:186px;top:489px;width:76px">Tina Cole</div>
<div class="td" style="left:262px;top:489px;width:104px">Finance</div>
<div class="td" style="left:366px;top:489px;width:76px">Meeting Summary</div>
<div class="td" style="left:442px;top:489px;width:151px">Email</div>
<div class="td" style="left:593px;top:489px;width:76px">High</div>
<div class="td" style="left:669px;top:489px;width:76px">Sent</div>
<div class="td" style="left:745px;top:489px;width:119px">68.5</div>
<div class="td" style="left:864px;top:489px;width:216px">Wonder him month life purpose care page.</div>
<div class="td" style="left:1080px;top:489px;width:76px">May</div>
<div class="td" style="left:1156px;top:489px;width:97px">2025</div>
<div class="td" style="left:35px;top:505px;width:75px">MSG1103</div>
<div class="td" style="left:110px;top:505px;width:76px">11-May-25</div>
<div class="td" style="left:186px;top:505px;width:76px">Jay Lynch</div>
<div class="td" style="left:262px;top:505px;width:104px">Admin</div>
<div class="td" style="left:366px;top:505px;width:76px">Meeting Summary</div>
<div class="td" style="left:442px;top:505px;width:151px">Meeting</div>
<div class="td" style="left:593px;top:505px;width:76px">High</div>
<div class="td" style="left:669px;top:505px;width:76px">Pending</div>
<div class="td" style="left:745px;top:505px;width:119px">21.3</div>
<div class="td" style="left:864px;top:505px;width:216px">Around news measure store recent everybody another.</div>
<div class="td" style="left:1080px;top:505px;width:76px">May</div>
<div class="td" style="left:1156px;top:505px;width:97px">2025</div>
<div class="td" style="left:35px;top:521px;width:75px">MSG1105</div>
<div class="td" style="left:110px;top:521px;width:76px">13-Jun-25</div>
<div class="td" style="left:186px;top:521px;width:76px">Linda Dean</div>
<div class="td" style="left:262px;top:521px;width:104px">HR</div>
<div class="td" style="left:366px;top:521px;width:76px">Resolution</div>
<div class="td" style="left:442px;top:521px;width:151px">Phone Call</div>
<div class="td" style="left:593px;top:521px;width:76px">High</div>
<div class="td" style="left:669px;top:521px;width:76px">Resolved</div>
<div class="td" style="left:745px;top:521px;width:119px">9.8</div>
<div class="td" style="left:864px;top:521px;width:216px">Recognize gun away stage much.</div>
<div class="td" style="left:1080px;top:521px;width:76px">Jun</div>
<div class="td" style="left:1156px;top:521px;width:97px">2025</div>
<div class="td" style="left:35px;top:537px;width:75px">MSG1107</div>
<div class="td" style="left:110px;top:537px;width:76px">9-Sep-25</div>
<div class="td" style="left:186px;top:537px;width:76px">Tina Cole</div>
<div class="td" style="left:262px;top:537px;width:104px">HR</div>
<div class="td" style="left:366px;top:537px;width:76px">Issue Raised</div>
<div class="td" style="left:442px;top:537px;width:151px">Meeting</div>
<div class="td" style="left:593px;top:537px;width:76px">High</div>
<div class="td" style="left:669px;top:537px;width:76px">Escalated</div>
<div class="td" style="left:745px;top:537px;width:119px">39.8</div>
<div class="td" style="left:864px;top:537px;width:216px">There glass not or before president.</div>
<div class="td" style="left:1080px;top:537px;width:76px">Sep</div>
<div class="td" style="left:1156px;top:537px;width:97px">2025</div>
<div class="td" style="left:35px;top:553px;width:75px">MSG1117</div>
<div class="td" style="left:110px;top:553px;width:76px">26-Aug-25</div>
<div class="td" style="left:186px;top:553px;width:76px">Jay Lynch</div>
<div class="td" style="left:262px;top:553px;width:104px">IT</div>
<div class="td" style="left:366px;top:553px;width:76px">Resolution</div>
<div class="td" style="left:442px;top:553px;width:151px">Phone Call</div>
<div class="td" style="left:593px;top:553px;width:76px">High</div>
<div class="td" style="left:669px;top:553px;width:76px">Pending</div>
<div class="td" style="left:745px;top:553px;width:119px">26.6</div>
<div class="td" style="left:864px;top:553px;width:216px">Camera floor listen mention guy high.</div>
<div class="td" style="left:1080px;top:553px;width:76px">Aug</div>
<div class="td" style="left:1156px;top:553px;width:97px">2025</div>
<div class="a" style="left:34px;top:110px;width:1px;height:464px;background:#c7c7c7"></div>
<div class="a" style="left:31px;top:110px;width:4px;height:18px;background:#c4c4c4"></div>
<div class="a" style="left:0;top:125px;width:35px;height:3px;background:#c4c4c4"></div>

<!-- title banner -->
<div class="a" style="left:35px;top:128px;width:1238px;height:24px;background:#069eae"></div>
<div class="a" style="left:518px;top:130.3px;font-size:17.2px;font-weight:bold;color:#e8ffff;line-height:20px;white-space:nowrap">Search by Search Keyword and Field Name</div>

<!-- Total Record -->
<div class="a" style="left:186px;top:168px;width:181px;height:21px;border:1px solid #6aa9ad;background:#fff"></div>
<div class="a" style="left:186px;top:168px;width:76px;height:21px;background:#64c4ca;border:1px solid #6aa9ad;color:#f4ffff;font-size:10px;font-weight:bold;line-height:19px;text-align:center">Total Record</div>
<div class="a" style="left:262px;top:168px;width:104px;height:21px;font-size:13.5px;font-weight:bold;color:#000;line-height:21px;text-align:center">94</div>

<!-- Select Column -->
<div class="a" style="left:593px;top:168px;width:272px;height:21px;border:1px solid #6aa9ad;background:#fff"></div>
<div class="a" style="left:593px;top:168px;width:76px;height:21px;background:#64c4ca;border:1px solid #6aa9ad;color:#f4ffff;font-size:9.8px;font-weight:bold;line-height:19px;text-align:center;white-space:nowrap">Select Column</div>
<div class="a" style="left:669px;top:168px;width:181px;height:21px;font-size:10px;font-weight:bold;color:#000;line-height:21px;text-align:center">Urgency Level</div>
<svg class="ico" style="left:854px;top:177px" width="5" height="3" viewBox="0 0 6 3"><path d="M0 0 H6 L3 3Z" fill="#888"/></svg>

<!-- Search Keyword -->
<div class="a" style="left:1080px;top:168px;width:193px;height:21px;border-top:1px solid #6aa9ad;border-bottom:1px solid #6aa9ad;background:#fff"></div>
<div class="a" style="left:1080px;top:168px;width:174px;height:21px;background:#64c4ca;border:1px solid #6aa9ad;color:#f4ffff;font-size:10px;font-weight:bold;line-height:19px;text-align:center">Search Keyword</div>

<!-- selected cell M14 -->
<div class="a" style="left:1253px;top:360px;width:21px;height:17px;border:2px solid #4169ad;border-right:none"></div>

<!-- scrollbar -->
<div class="a" style="left:1273px;top:110px;width:7px;height:464px;background:#fff;border-left:1px solid #ededed"></div>
<div class="a" style="left:1274px;top:129px;width:6px;height:19px;background:#e6e6e6;border:1px solid #dcdcdc;border-radius:2px"></div>
<div class="a" style="left:1273px;top:550px;width:7px;height:1px;background:#eeeeee"></div>
<svg style="position:absolute;left:1275px;top:554px" width="5" height="3" viewBox="0 0 6 3"><path d="M0 3 H6 L3 0Z" fill="#8a8a8a"/></svg>
<svg style="position:absolute;left:1275px;top:566.5px" width="5" height="3" viewBox="0 0 6 3"><path d="M0 0 H6 L3 3Z" fill="#8a8a8a"/></svg>
<div class="a" style="left:0;top:572px;width:1280px;height:2px;background:#e6e6e6"></div>
</body></html>
